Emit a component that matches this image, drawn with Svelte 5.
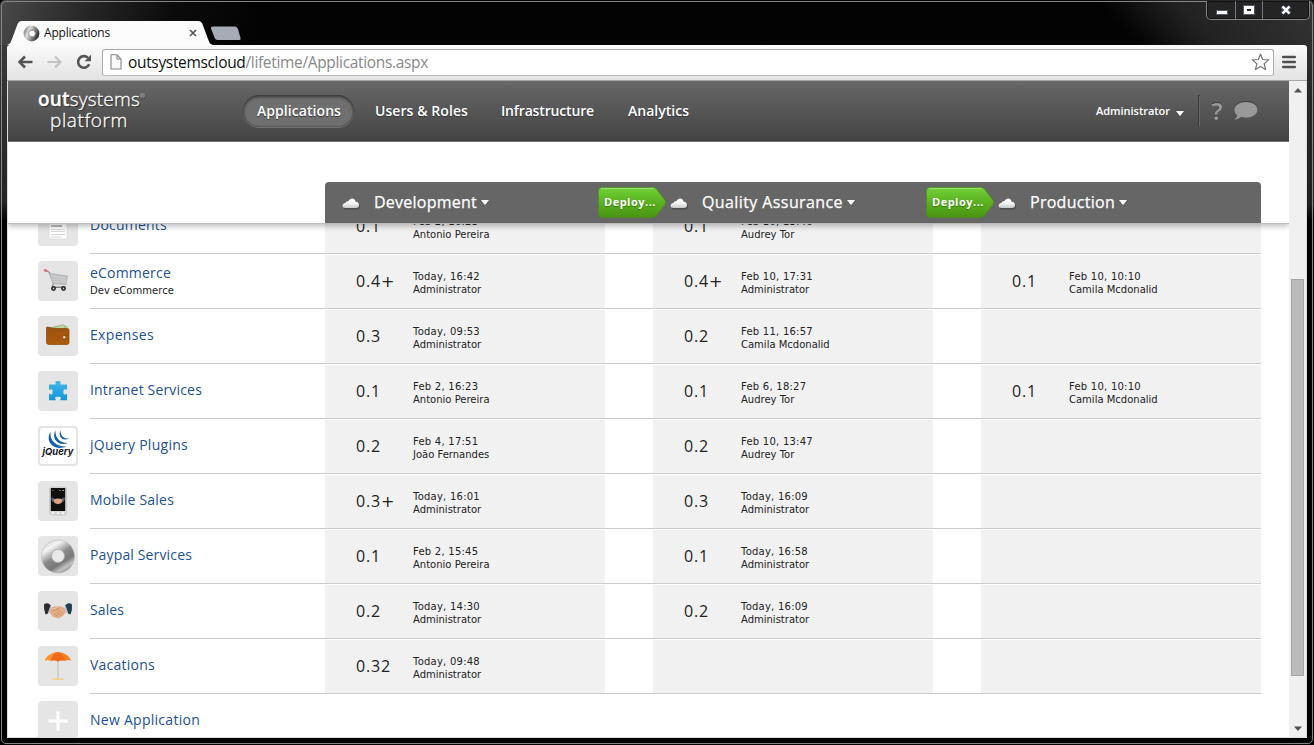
<script>
  const nav = [
    { label: 'Applications', w: 84, active: true },
    { label: 'Users & Roles', w: 93 },
    { label: 'Infrastructure', w: 93 },
    { label: 'Analytics', w: 61 }
  ];

  const environments = [
    { name: 'Development', w: 103, deploy: true },
    { name: 'Quality Assurance', w: 141, deploy: true },
    { name: 'Production', w: 85, deploy: false }
  ];

  const v = (version, date, who) => ({ version, date, who });
  const apps = [
    { icon: 'doc', name: 'Documents', w: 77, cells: [v('0.1', 'Feb 2, 16:23', 'Antonio Pereira'), v('0.1', 'Feb 10, 13:46', 'Audrey Tor'), null] },
    { icon: 'cart', name: 'eCommerce', w: 81, note: 'Dev eCommerce', cells: [v('0.4+', 'Today, 16:42', 'Administrator'), v('0.4+', 'Feb 10, 17:31', 'Administrator'), v('0.1', 'Feb 10, 10:10', 'Camila Mcdonalid')] },
    { icon: 'wallet', name: 'Expenses', w: 64, cells: [v('0.3', 'Today, 09:53', 'Administrator'), v('0.2', 'Feb 11, 16:57', 'Camila Mcdonalid'), null] },
    { icon: 'puzzle', name: 'Intranet Services', w: 112, cells: [v('0.1', 'Feb 2, 16:23', 'Antonio Pereira'), v('0.1', 'Feb 6, 18:27', 'Audrey Tor'), v('0.1', 'Feb 10, 10:10', 'Camila Mcdonalid')] },
    { icon: 'jquery', name: 'jQuery Plugins', w: 98, cells: [v('0.2', 'Feb 4, 17:51', 'João Fernandes'), v('0.2', 'Feb 10, 13:47', 'Audrey Tor'), null] },
    { icon: 'phone', name: 'Mobile Sales', w: 84, cells: [v('0.3+', 'Today, 16:01', 'Administrator'), v('0.3', 'Today, 16:09', 'Administrator'), null] },
    { icon: 'ring', name: 'Paypal Services', w: 102, cells: [v('0.1', 'Feb 2, 15:45', 'Antonio Pereira'), v('0.1', 'Today, 16:58', 'Administrator'), null] },
    { icon: 'hands', name: 'Sales', w: 34, cells: [v('0.2', 'Today, 14:30', 'Administrator'), v('0.2', 'Today, 16:09', 'Administrator'), null] },
    { icon: 'umbrella', name: 'Vacations', w: 65, cells: [v('0.32', 'Today, 09:48', 'Administrator'), null, null] }
  ];

  // Tracks a label so that it fills the given width.
  function track(node, width) {
    const n = node.textContent.length;
    const natural = node.getBoundingClientRect().width;
    node.style.letterSpacing = `${(width - natural) / n}px`;
  }
</script>

{#snippet glyph(kind)}
  <svg class="glyph" viewBox="0 0 40 40" width="40" height="40">
    {#if kind === 'doc'}
      <path d="M11 6h18v27H11z" fill="#fff" stroke="#d4d4d4" stroke-width=".6" />
      <path d="M13 20h11" stroke="#777" />
      <path d="M13 23.500h14M13 25.500h14M13 28.500h14M13 31h10" stroke="#ccc" stroke-width=".8" />
    {:else if kind === 'cart'}
      <path d="M8 9.500 11.500 11.500 15.500 23q-2 2 .5 3H27" fill="none" stroke="#8d8d8d" stroke-width="1.200" />
      <path d="M11 12.200 29.500 15 28 23.500 15.500 23z" fill="#c2c4c6" stroke="#a4a6a8" stroke-width=".6" />
      <path d="M12 15l17 1.800M13 18l15.500 1.200M14 20.500h14.500" stroke="#d2d4d5" stroke-width=".5" />
      <path d="M5.500 8.700 8 8l2 2.300-3.200.7z" fill="#df6b68" />
      <path d="M16 26.500h10" stroke="#777" />
      <circle cx="15.500" cy="27.500" r="2.400" fill="#222" /><circle cx="25.500" cy="27.500" r="2.400" fill="#222" />
      <circle cx="15.500" cy="27.500" r=".9" fill="#ccc" /><circle cx="25.500" cy="27.500" r=".9" fill="#ccc" />
    {:else if kind === 'wallet'}
      <path d="M11 12 24 9l4 1 1.500 1.500-1 2H10z" fill="#a8c68a" stroke="#8aab6c" stroke-width=".5" />
      <path d="M14 12.500 25.500 8.700l1 2.800" fill="#cbdcb4" stroke="#8aab6c" stroke-width=".5" />
      <path d="M8.500 12q0-1.500 1.500-1l6 1.500h13q2 0 2 1.500v12.500q0 2-2 2H11q-2.500 0-2.500-2z" fill="url(#leather)" stroke="#8a4608" stroke-width=".7" />
      <path d="M31 19.500h-4.500q-2 0-2 1.700t2 1.800H31" fill="#a5560b" stroke="#8a4608" stroke-width=".7" />
      <circle cx="26.200" cy="21.200" r="1.200" fill="#f1dfbe" />
    {:else if kind === 'puzzle'}
      <path d="M11 13.500h6.500c1-1.200-.5-1.500-.2-2.500.4-1.400 5-1.400 5.400 0 .3 1-1.200 1.300-.2 2.500H29v5c-1 1-1.500-.6-2.500-.3-1.500.4-1.500 5 0 5.400 1 .2 1.500-1.400 2.500-.4v6h-6.500c-1-1 .8-1.500.5-2.500-.4-1.400-5.600-1.400-6 0-.3 1 1.500 1.500.5 2.500H11v-6c1-1 1.500.6 2.500.4 1.500-.4 1.500-5 0-5.400-1-.3-1.500 1.300-2.500.3z" fill="url(#sky)" />
    {:else if kind === 'jquery'}
      <rect x="2" y="2" width="36" height="36" rx="3" fill="#fff" />
      <g fill="#1163a6">
        <path d="M12.500 6c-5.500 8 2 20 16 14.500-9.500.5-17-5.500-16-14.500z" />
        <path d="M17.500 4.500c-4.500 7.500 2.500 16.500 12.500 12.500-7.500.5-13-5-12.500-12.500z" />
        <path d="M22.500 4.500c-3 5.500 2 11.500 8.500 8-5 .5-8.500-2.500-8.500-8z" />
      </g>
      <text x="4.500" y="28.800" textLength="31" lengthAdjust="spacingAndGlyphs" font-family="Inter, sans-serif" font-size="9.500" font-style="italic" font-weight="700" fill="#15181f">jQuery</text>
    {:else if kind === 'phone'}
      <rect x="11.500" y="6" width="17" height="28" rx="2" fill="#d8d8d8" stroke="#bbb" stroke-width=".5" />
      <path d="M12.800 7h14.400v23H12.800z" fill="#130e0e" />
      <path d="M14 9.500h1.500M21 9.500h2" stroke="#567a3c" /><path d="M24 9.500h2" stroke="#888" />
      <path d="M13 16.500l3 .5.500 4-2.500-.5zM27 16.500l-3 .5-.5 4 2.500-.5z" fill="#4b6478" />
      <path d="M15.500 18.500q4.500-2 9 0l-1 3.500-3.500 1.200L16.500 22z" fill="#dda582" />
      <path d="M14 32.200h2M19 32.200h2M24 32.200h2" stroke="#fff" stroke-width="1.400" />
    {:else if kind === 'ring'}
      <circle cx="20" cy="20.500" r="16.500" fill="url(#metal)" stroke="#aaa" stroke-width=".5" />
      <circle cx="20" cy="20" r="6.500" fill="#e9e9e9" stroke="#aaa" stroke-width=".8" />
    {:else if kind === 'hands'}
      <path d="M6 13.500q2-2 4.500-1l2.500 2-3 8-2.500 1Q5.500 18 6 13.500z" fill="#302a32" />
      <path d="M34 13.500q-2-2-4.500-1l-2.500 2 3 8 2.500 1q2-5 1.500-10z" fill="#263d4e" />
      <path d="M12.500 14.500l-2.500 7 1.500.5 2-6.500zM27.500 14.500l2.500 7-1.500.5-2-6.500z" fill="#a9c6d6" />
      <path d="M13.500 16.500q4-2 6.500-1 3-1 6.500 1.500l1.500 4-3 4-5 2.500-5.500-2-3-4.500z" fill="#e4ac86" />
      <path d="M14.500 20l5-1.500 5 4M16 23l4 2M19 21.500l4 3M16 17.500l5-.5" fill="none" stroke="#bc7f59" stroke-width=".6" />
      <path d="M14.500 18l5-1.500" stroke="#f2cfb2" />
    {:else if kind === 'umbrella'}
      <path d="M20 14v18" stroke="#cfd2c8" stroke-width="2" />
      <path d="M13 33.500q1-1.500 7-1.500t7 1.500q-7 1.200-14 0z" fill="#efd08d" />
      <path d="M7 14.500q2-7 13-8.500 11 1.500 13 8.500-3-1.200-6 .2-3.500-1-7 .8-3.500-1.800-7-.8-3-1.400-6-.2z" fill="#f58220" />
      <path d="M20 6q-6 2-7 8.700-3-1.400-6-.2Q9 8 20 6z" fill="#f9932a" />
      <path d="M20 6q5 2 7 8.700-3.500-1-7 .8-3.500-1.800-7-.8Q14 8 20 6z" fill="#ef6a1c" />
    {:else}
      <path d="M20 10.500v19M10.500 20h19" stroke="#fff" stroke-width="3" />
    {/if}
  </svg>
{/snippet}

<svg class="defs" width="0" height="0">
  <defs>
    <linearGradient id="leather" x2="0" y2="1"><stop stop-color="#9c5210" /><stop offset="1" stop-color="#ad5b0c" /></linearGradient>
    <linearGradient id="sky" x2="0" y2="1"><stop stop-color="#45b7e8" /><stop offset="1" stop-color="#0f96dc" /></linearGradient>
    <linearGradient id="metal" x1=".15" y1=".05" x2=".75" y2="1">
      <stop stop-color="#d8d8d8" /><stop offset=".2" stop-color="#f4f4f4" /><stop offset=".48" stop-color="#8b8b8b" /><stop offset=".7" stop-color="#777" /><stop offset=".85" stop-color="#c2c2c2" /><stop offset="1" stop-color="#888" />
    </linearGradient>
    <linearGradient id="fav" x2="1" y2=".4"><stop stop-color="#555" /><stop offset=".4" stop-color="#ddd" /><stop offset="1" stop-color="#333" /></linearGradient>
    <linearGradient id="cloudfill" x2="0" y2="1"><stop stop-color="#fff" /><stop offset=".5" stop-color="#f4f4f4" /><stop offset="1" stop-color="#c8c8c8" /></linearGradient>
    <linearGradient id="green" x2="0" y2="1"><stop stop-color="#77d444" /><stop offset=".12" stop-color="#6bca32" /><stop offset=".5" stop-color="#5bb121" /><stop offset="1" stop-color="#489411" /></linearGradient>
  </defs>
</svg>

<div class="window">
  <div class="outline"></div>
  <div class="caption">
    <i><svg width="12" height="5"><rect x=".5" y=".5" width="11" height="4" fill="#fff" stroke="#555a70" /></svg></i>
    <i><svg width="12" height="10"><rect x="2.500" y="2.500" width="7" height="5" fill="none" stroke="#fff" stroke-width="3" /><rect x=".5" y=".5" width="11" height="9" fill="none" stroke="#555a70" /></svg></i>
    <i class="wide"><svg width="12" height="10"><path d="M2 1.500l8 7M10 1.500l-8 7" stroke="#555a70" stroke-width="4" /><path d="M2.500 1.500l7 7M9.500 1.500l-7 7" stroke="#fff" stroke-width="2.400" /></svg></i>
  </div>

  <div class="tabs">
    <div class="tab">
      <svg class="tabshape" width="206" height="24" viewBox="0 0 206 24">
        <path d="M0 24c3-1 3.500-2 5-6l5-13.500c1-3 2-4.500 5-4.500h176c3 0 4 1.500 5 4.500l5 13.500c1.500 4 2 5 5 6z" fill="#fcfcfc" />
      </svg>
      <svg class="favicon" width="17" height="17"><circle cx="8.500" cy="8.500" r="7.900" fill="url(#fav)" /><circle cx="9" cy="8.500" r="3.300" fill="#fff" stroke="#999" /></svg>
      <span class="title" use:track={66}>Applications</span>
      <svg class="close" width="8" height="8"><path d="M1 1l6 6M7 1 1 7" stroke="#555" stroke-width="1.700" /></svg>
    </div>
    <svg class="newtab" width="31" height="15"><path d="M3 .5h22q2 0 3 2.500l2.500 9q.500 2-1 2H7.500q-2 0-2.800-2L1 2.500Q.500.500 3 .500z" fill="#a6abb5" /></svg>
  </div>

  <div class="toolbar">
    <svg class="arrow" width="16" height="14"><path d="M15.500 7H3M8 1.500 2.500 7 8 12.500" fill="none" stroke="#555" stroke-width="2.600" /></svg>
    <svg class="arrow" width="16" height="14"><path d="M.5 7H13M8 1.500 13.500 7 8 12.500" fill="none" stroke="#c3c3c3" stroke-width="2.200" /></svg>
    <svg class="reload" width="16" height="16"><path d="M13.200 10.300A5.800 5.800 0 1 1 12 3.800" fill="none" stroke="#555" stroke-width="2.600" /><path d="M15 .8v6.400H8.600z" fill="#555" /></svg>
    <div class="address">
      <svg width="12" height="16"><path d="M1 .8h6l4 4.200v10H1zM7 .8V5h4" fill="#fafafa" stroke="#888" stroke-width="1.100" /></svg>
      <span class="url" use:track={300}><b>outsystemscloud</b>/lifetime/Applications.aspx</span>
      <svg class="star" width="19" height="18" viewBox="0 0 19 18"><path d="M9.500 1l2.200 5.500 6 .4-4.600 3.800 1.500 5.900-5.100-3.200-5.100 3.200 1.500-5.900L1.300 6.900l6-.4z" fill="#fff" stroke="#777" stroke-width="1.200" stroke-linejoin="round" /></svg>
    </div>
    <svg class="burger" width="14" height="14"><path d="M1.200 2h11.600M1.200 7h11.600M1.200 12h11.600" stroke="#505050" stroke-width="2.500" stroke-linecap="round" /></svg>
  </div>

  <div class="viewport">
    <div class="page">
      <header>
        <div class="logo">
          <div class="l1"><span use:track={102}><b>out</b>systems</span><sup>®</sup></div>
          <div class="l2"><span use:track={78}>platform</span></div>
        </div>
        <nav>
          {#each nav as item}
            <a class:active={item.active}><span use:track={item.w}>{item.label}</span></a>
          {/each}
        </nav>
        <div class="user"><span use:track={74}>Administrator</span><svg width="8" height="5"><path d="M0 0h8L4 5z" fill="#fff" /></svg></div>
        <div class="help">
          <span class="q">?</span>
          <svg width="25" height="20"><path d="M13 1c6.500 0 11.500 3.300 11.500 7.700s-5 7.800-11.500 7.800c-2 0-3.500-.2-5-.8C6.500 17.500 4 18.500 1 18.500c2-1.300 2.800-2.800 3-4.500C2.200 12.600 1.500 10.800 1.500 8.700 1.500 4.300 6.500 1 13 1z" fill="#999" /></svg>
        </div>
      </header>

      <div class="envbar">
        <div class="envs">
          {#each environments as env}
            <div class="env">
              <svg class="cloud" width="20" height="14"><path d="M4 12.500Q1 12.500 1 9.700 1 7.500 4 7 4.500 4.500 7 4.500 8 2 10.500 2q3.500 0 4 3.200 3.500.5 3.500 4 0 3.300-3 3.300z" fill="#444" opacity=".7" /><path d="M3.500 11Q.5 11 .5 8.800.5 6.500 3.500 6 4 4 6.500 4 7.500 1.500 10 1.500q3 0 3.700 3.200 3.300.3 3.300 3.300 0 3-3 3z" fill="url(#cloudfill)" /></svg>
              <span class="envname" use:track={env.w}>{env.name}</span>
              <svg class="caret" width="8" height="5"><path d="M0 0h8L4 5z" fill="#fff" /></svg>
              {#if env.deploy}
                <div class="deploy">
                  <svg width="69" height="31"><path d="M4 .5h51q2 0 3.500 1.700l8.500 11q1.500 2 0 4l-8.500 11.300Q57 30.500 55 30.500H4Q.5 30.500.5 27V4Q.5.500 4 .500z" fill="url(#green)" stroke="#4a9118" stroke-opacity=".6" /><path d="M3 1.500h52" stroke="#a5e883" stroke-opacity=".7" /></svg>
                  <span use:track={52}>Deploy...</span>
                </div>
              {/if}
            </div>
          {/each}
        </div>
      </div>

      <div class="list">
        {#each apps as app}
          <div class="row">
            <div class="icon">{@render glyph(app.icon)}</div>
            <div class="line">
              <div class="name" class:noted={app.note}>
                <span class="link" use:track={app.w}>{app.name}</span>
                {#if app.note}<small use:track={84}>{app.note}</small>{/if}
              </div>
              {#each app.cells as cell}
                <div class="cell">
                  {#if cell}
                    <span class="version">{cell.version.replace('+', '')}{#if cell.version.endsWith('+')}<span class="plus">+</span>{/if}</span>
                    <span class="meta"><span class="date">{cell.date}</span><br />{cell.who}</span>
                  {/if}
                </div>
              {/each}
            </div>
          </div>
        {/each}
        <div class="row">
          <div class="icon">{@render glyph('plus')}</div>
          <div class="line last"><div class="name"><span class="link" use:track={110}>New Application</span></div></div>
        </div>
      </div>
    </div>

    <div class="scroll">
      <svg width="8" height="5"><path d="M0 4.500 4 0l4 4.500z" fill="#505050" /></svg>
      <div class="rail"><div class="thumb"></div></div>
      <svg width="8" height="5"><path d="M0 .5 4 5l4-4.500z" fill="#505050" /></svg>
    </div>
  </div>
</div>

<style>
  :global(body) { background: #000; overflow: hidden; }
  .defs { position: absolute; }
  svg { display: block; flex: none; }
  .window {
    position: relative; box-sizing: border-box; width: 1314px; height: 745px; padding: 0 7px 7px 7px;
    display: flex; flex-direction: column; overflow: hidden; border-radius: 5px;
    font-family: "Open Sans", "Noto Sans", sans-serif;
    background:
      linear-gradient(105deg, #4a4a4a 0, #252525 90px, #0b0b0b 170px, transparent 260px) 0 0 / 500px 45px no-repeat,
      linear-gradient(48deg, transparent 50%, #222 68%, #343434 100%) right top / 370px 70px no-repeat,
      linear-gradient(#3a3a3a, #242424 90%, transparent) 0 40px / 8px 180px no-repeat,
      linear-gradient(#2a2a2a, #202020 90%, transparent) right 60px / 8px 160px no-repeat,
      #030303;
  }
  .outline { position: absolute; inset: 1px; border: 1px solid #858585; border-radius: 5px; pointer-events: none; }
  .caption {
    position: absolute; right: 4px; top: 1px; display: flex; height: 18px; box-sizing: content-box;
    border: 1px solid #858585; border-top: 0; border-radius: 0 0 5px 5px; background: #242424; box-shadow: inset 0 0 0 1px #111;
  }
  .caption i { width: 28px; display: flex; align-items: center; justify-content: center; border-left: 1px solid #777; }
  .caption i:nth-child(2) { width: 26px; }
  .caption i:first-child { border-left: 0; }
  .caption i:first-child svg { margin: 4px 0 0 2px; }
  .caption .wide { width: 46px; }

  .tabs { height: 45px; display: flex; align-items: flex-end; flex: none; }
  .tab { position: relative; width: 206px; height: 24px; display: flex; align-items: center; box-sizing: border-box; padding-left: 16px; }
  .tabshape { position: absolute; left: 0; bottom: 0; }
  .favicon { position: relative; }
  .title { position: relative; margin-left: 4px; font-size: 12px; line-height: 24px; color: #111; white-space: nowrap; }
  .close { position: relative; margin-left: 79px; }
  .newtab { margin: 0 0 4px -3px; }

  .toolbar {
    flex: none; height: 36px; box-sizing: border-box; display: flex; align-items: center; padding: 0 10px 1px 10px;
    background: linear-gradient(#fbfbfb, #e2e2e2); border-bottom: 1px solid #a5a5a5; border-radius: 3px 3px 0 0;
  }
  .arrow { margin-right: 14px; }
  .arrow + .arrow { margin-right: 13px; }
  .reload { margin-right: 10px; }
  .address {
    flex: 1; height: 27px; box-sizing: border-box; display: flex; align-items: center; padding: 0 4px 0 7px;
    background: #fff; border: 1px solid #aaa; border-bottom-color: #bbb; border-radius: 3px; margin-right: 9px;
  }
  .url { margin-left: 6px; font-size: 15.500px; line-height: 24px; color: #888; white-space: nowrap; }
  .url b { font-weight: 400; color: #111; }
  .star { margin-left: auto; margin-right: -1px; }
  .burger { margin-left: -1px; margin-right: 1px; }

  .viewport { flex: 1; min-height: 0; display: flex; background: #fff; border: 0 solid #ddd; border-width: 0 1px 1px 1px; }
  .page { width: 1281px; display: flex; flex-direction: column; overflow: hidden; }
  header {
    flex: none; height: 61px; box-sizing: border-box; display: flex; align-items: center; padding: 0 31px 0 30px;
    background: linear-gradient(#676767, #444); border-bottom: 1px solid #777; color: #fff;
  }
  .logo { width: 206px; text-shadow: 1px 1px 1px #222; font-size: 19px; font-weight: 300; line-height: 21px; margin-top: -3px; -webkit-text-stroke: .300px #fff; }
  .logo span { display: inline-block; white-space: nowrap; }
  .l1, .l2 { display: flex; }
  .logo b { font-weight: 600; }
  .logo sup { font-size: 6px; line-height: 14px; -webkit-text-stroke: 0; }
  .l2 { padding-left: 12px; }
  nav { display: flex; gap: 8px; margin-left: -1px; }
  nav a {
    height: 32px; padding: 0 13px; display: flex; align-items: center; border-radius: 17px;
    font-size: 14px; font-weight: 600; white-space: nowrap; text-shadow: 0 1px 1px #333;
  }
  nav a span { margin-top: -2px; }
  nav a.active { padding-left: 14px; background: #6f6f6f; box-shadow: inset 0 2px 3px #3a3a3a, inset 0 0 2px #333, 0 1px 0 #707070; }
  nav a:nth-child(3) { margin-left: -1px; }
  .user { margin-left: auto; display: flex; align-items: center; gap: 6px; font-size: 11px; font-weight: 600; }
  .user span { margin-top: -1px; }
  .user svg { margin-top: 4px; }
  .help { display: flex; align-items: center; height: 30px; margin-left: 14px; padding-left: 12px; border-left: 1px solid #3b3b3b; box-shadow: inset 1px 0 #666; gap: 10px; filter: drop-shadow(0 -1px 0 #3d3d3d); }
  .q { font: 600 24px/28px "Noto Sans", sans-serif; color: #999; width: 12px; text-align: center; }

  .envbar {
    flex: none; height: 81px; border-bottom: 1px solid #bbb; background: #fff;
    position: relative; z-index: 1; box-shadow: 0 2px 6px rgba(0, 0, 0, .28); display: flex; align-items: flex-end;
  }
  .envs { margin-left: 317px; width: 936px; height: 41px; background: #666; border-radius: 4px 4px 0 0; display: grid; grid-template-columns: 328px 328px 280px; }
  .env { position: relative; display: flex; align-items: center; padding-left: 17px; color: #fff; }
  .cloud { margin-top: 3px; }
  .envname { margin-left: 12px; margin-top: -2px; font-size: 16px; font-weight: 500; -webkit-text-stroke: .250px #fff; white-space: nowrap; }
  .caret { margin-left: 4px; }
  .deploy { position: absolute; left: 273px; top: 5px; z-index: 2; }
  .deploy span { position: absolute; left: 6px; top: 6px; font-size: 11px; line-height: 17px; font-weight: 700; text-shadow: 0 1px 1px #357a0a; white-space: nowrap; }

  .list { flex: 1; min-height: 0; margin-top: -25px; overflow: hidden; padding-left: 30px; }
  .row { display: flex; height: 55px; }
  .icon { width: 40px; height: 40px; margin: 7px 12px 0 0; border-radius: 4px; background: #e5e5e5; flex: none; }
  .line { width: 1171px; height: 55px; box-sizing: border-box; border-bottom: 1px solid #ccc; display: grid; grid-template-columns: 235px 280px 48px 280px 48px 280px; }
  .line.last { border: 0; }
  .cell { margin-top: 1px; background: #f1f1f1; display: flex; align-items: center; padding-left: 31px; box-sizing: border-box; }
  .cell:nth-child(3) { grid-column: 4; }
  .cell:nth-child(4) { grid-column: 6; }
  .name { display: flex; flex-direction: column; align-items: flex-start; padding-top: 16px; white-space: nowrap; }
  .name.noted { padding-top: 9px; }
  .link { font-size: 14px; line-height: 20px; color: #1b5197; }
  small { font: 10px/13px "DejaVu Sans", sans-serif; color: #222; margin-top: 1px; }
  .version { width: 57px; font-size: 16px; line-height: 22px; letter-spacing: .850px; color: #222; margin-top: -2px; }
  .plus { font: 400 16px/16px "DejaVu Sans", sans-serif; letter-spacing: 0; }
  .meta { font: 10px/13px "DejaVu Sans", sans-serif; color: #222; white-space: nowrap; padding-top: 3px; }
  .date { letter-spacing: .240px; }

  .scroll { width: 17px; background: #f0f0f0; display: flex; flex-direction: column; align-items: center; padding: 7px 0 6px; box-sizing: border-box; }
  .rail { flex: 1; padding-top: 186px; }
  .thumb { box-sizing: border-box; width: 13px; height: 397px; background: #bbb; border: 1px solid #a6a6a6; }
</style>
